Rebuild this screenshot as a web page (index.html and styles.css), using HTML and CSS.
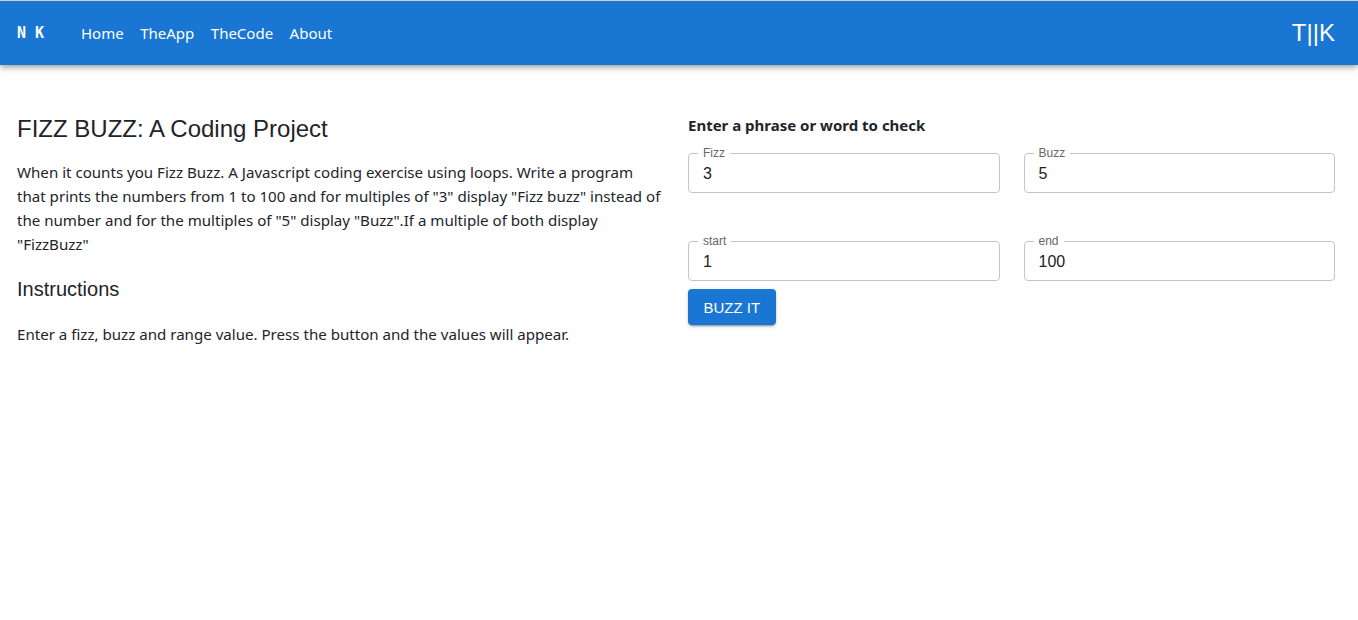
FILE: index.html
```html
<!DOCTYPE html>
<html lang="en">
<head>
<meta charset="utf-8">
<title>Fizz Buzz</title>
<link rel="stylesheet" href="styles.css">
</head>
<body>
<header class="appbar">
  <div class="brand">N K</div>
  <nav class="nav">
    <a href="#">Home</a>
    <a href="#">TheApp</a>
    <a href="#">TheCode</a>
    <a href="#">About</a>
  </nav>
  <div class="logo">T||K</div>
</header>
<main class="content">
  <section class="intro">
    <h1 class="title">FIZZ BUZZ: A Coding Project</h1>
    <p class="text">When it counts you Fizz Buzz. A Javascript coding exercise using loops. Write a program that prints the numbers from 1 to 100 and for multiples of "3" display "Fizz buzz" instead of the number and for the multiples of "5" display "Buzz".If a multiple of both display "FizzBuzz"</p>
    <h2 class="subtitle">Instructions</h2>
    <p class="text">Enter a fizz, buzz and range value. Press the button and the values will appear.</p>
  </section>
  <section class="form">
    <div class="form-title">Enter a phrase or word to check</div>
    <div class="row">
      <div class="field"><span class="label">Fizz</span><span class="value">3</span></div>
      <div class="field"><span class="label">Buzz</span><span class="value">5</span></div>
    </div>
    <div class="row row-second">
      <div class="field"><span class="label">start</span><span class="value">1</span></div>
      <div class="field"><span class="label">end</span><span class="value">100</span></div>
    </div>
    <button class="btn">BUZZ IT</button>
  </section>
</main>
</body>
</html>
```
FILE: styles.css
```css
html, body {
  margin: 0;
  padding: 0;
  background: #fff;
}
body {
  font-family: "Noto Sans", "Open Sans", sans-serif;
  color: #212529;
}
.appbar {
  border-top: 1px solid #cfcfcf;
  height: 64px;
  background: #1976d2;
  color: #fff;
  display: flex;
  align-items: center;
  padding: 0 23px 0 17px;
  box-shadow: 0 2px 4px -1px rgba(0,0,0,0.2), 0 4px 5px 0 rgba(0,0,0,0.14), 0 1px 10px 0 rgba(0,0,0,0.12);
}
.brand {
  font-family: "DejaVu Sans Mono", "Liberation Mono", monospace;
  font-weight: bold;
  font-size: 15px;
  width: 64px;
}
.nav {
  display: flex;
  gap: 16.5px;
  flex: 1;
}
.nav a {
  color: #fff;
  text-decoration: none;
  font-size: 15px;
}
.logo {
  font-family: "Liberation Sans", Arial, sans-serif;
  font-size: 24px;
}
.content {
  display: grid;
  grid-template-columns: 1fr 1fr;
  column-gap: 24px;
  padding: 49px 23px 0 17px;
}
.title {
  font-family: "Liberation Sans", Arial, sans-serif;
  font-weight: normal;
  font-size: 24px;
  margin: 1px 0 17px;
  line-height: 28px;
}
.text {
  font-size: 15.1px;
  line-height: 24px;
  margin: 0 0 21px;
}
.subtitle {
  font-family: "Liberation Sans", Arial, sans-serif;
  font-weight: normal;
  font-size: 20px;
  line-height: 24px;
  margin: 0 0 21px;
}
.form-title {
  font-weight: bold;
  font-size: 15px;
  line-height: 20px;
  margin: 1px 0 18px;
}
.row {
  display: grid;
  grid-template-columns: 1fr 1fr;
  column-gap: 24px;
}
.row-second {
  margin-top: 48px;
}
.field {
  border: 1px solid #c4c4c4;
  border-radius: 4px;
  padding: 0 14px;
  height: 40px;
  box-sizing: border-box;
  position: relative;
  display: flex;
  align-items: center;
  font-family: "Liberation Sans", Arial, sans-serif;
}
.label {
  position: absolute;
  top: -7px;
  left: 9px;
  padding: 0 5px;
  background: #fff;
  font-size: 12px;
  line-height: 12px;
  color: #666;
}
.value {
  font-size: 16px;
  color: #222;
  line-height: 20px;
  padding-top: 2px;
}
.btn {
  display: block;
  margin-top: 8px;
  background: #1976d2;
  color: #fff;
  border: 0;
  border-radius: 4px;
  height: 36px;
  padding: 0 15.5px;
  font-family: "Liberation Sans", Arial, sans-serif;
  font-size: 15px;
  font-weight: 400;
  box-shadow: 0 3px 1px -2px rgba(0,0,0,0.2), 0 2px 2px 0 rgba(0,0,0,0.14), 0 1px 5px 0 rgba(0,0,0,0.12);
}
```
